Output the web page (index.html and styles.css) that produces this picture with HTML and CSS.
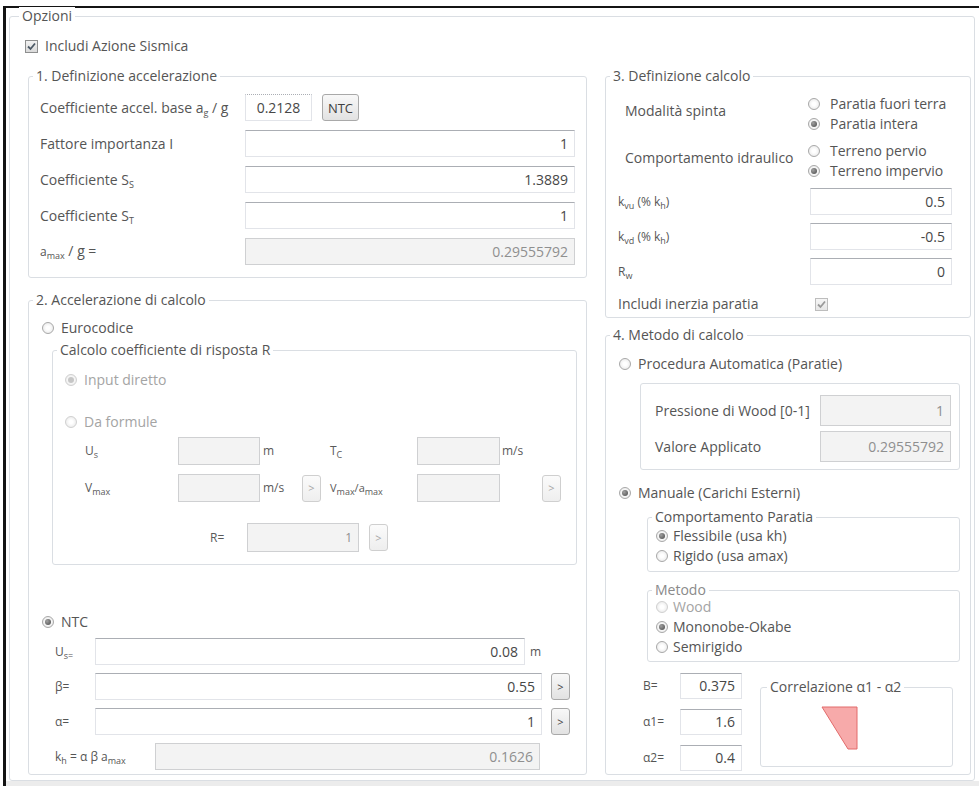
FILE: index.html
```html
<!DOCTYPE html>
<html lang="it">
<head>
<meta charset="utf-8">
<title>Opzioni sismiche</title>
<link rel="stylesheet" href="styles.css">
</head>
<body>
<div class="window">
  <div class="group opzioni">
    <span class="legend">Opzioni</span>
    <div class="top-check">
      <span class="checkbox"><svg class="tick" viewBox="0 0 11 11"><path d="M2 5.5 L4.5 8 L9 2.5"/></svg></span>
      <span>Includi Azione Sismica</span>
    </div>

    <div class="columns">
      <!-- left column: sections 1 and 2 -->
      <div class="col">
        <div class="group sec1">
          <span class="legend">1. Definizione accelerazione</span>
          <div class="frow">
            <span class="flabel">Coefficiente accel. base a<sub>g</sub> / g</span>
            <span class="field short">0.2128</span>
            <span class="button ntc">NTC</span>
          </div>
          <div class="frow"><span class="flabel">Fattore importanza I</span><span class="field wide">1</span></div>
          <div class="frow"><span class="flabel">Coefficiente S<sub>S</sub></span><span class="field wide">1.3889</span></div>
          <div class="frow"><span class="flabel">Coefficiente S<sub>T</sub></span><span class="field wide">1</span></div>
          <div class="frow"><span class="flabel"><span class="amax">a<sub>max</sub></span> / g =</span><span class="field wide dis-field">0.29555792</span></div>
        </div>

        <div class="group sec2">
          <span class="legend">2. Accelerazione di calcolo</span>
          <div class="opt euro"><span class="radio"></span><span>Eurocodice</span></div>

          <div class="group rbox">
            <span class="legend">Calcolo coefficiente di risposta R</span>
            <div class="opt dis in-dir"><span class="radio on dis"></span><span>Input diretto</span></div>
            <div class="opt dis da-form"><span class="radio dis"></span><span>Da formule</span></div>
            <div class="erow us">
              <span class="elabel">U<sub>s</sub></span>
              <span class="field dis-field w82"></span>
              <span class="unit">m</span>
              <span class="elabel2">T<sub>C</sub></span>
              <span class="field dis-field w83"></span>
              <span class="unit2">m/s</span>
            </div>
            <div class="erow vmax">
              <span class="elabel">V<sub>max</sub></span>
              <span class="field dis-field w82"></span>
              <span class="unit"><span class="unit-text">m/s</span><span class="button mini dis-btn">&gt;</span></span>
              <span class="elabel2 tiny">V<sub>max</sub>/a<sub>max</sub></span>
              <span class="field dis-field w83"></span>
              <span class="unit2"></span>
              <span class="button mini dis-btn">&gt;</span>
            </div>
            <div class="erow rrow">
              <span class="rlabel">R=</span>
              <span class="field dis-field r-field">1</span>
              <span class="button mini dis-btn r-btn">&gt;</span>
            </div>
          </div>

          <div class="opt ntc-opt"><span class="radio on"></span><span>NTC</span></div>
          <div class="nrow">
            <span class="nlabel">U<sub>s=</sub></span>
            <span class="field n-us">0.08</span>
            <span class="n-unit">m</span>
          </div>
          <div class="nrow">
            <span class="nlabel">β=</span>
            <span class="field n-long">0.55</span>
            <span class="button mini n-btn">&gt;</span>
          </div>
          <div class="nrow">
            <span class="nlabel">α=</span>
            <span class="field n-long">1</span>
            <span class="button mini n-btn">&gt;</span>
          </div>
          <div class="nrow">
            <span class="nlabel kh">k<sub>h</sub> = α β a<sub>max</sub></span>
            <span class="field dis-field n-kh">0.1626</span>
          </div>
        </div>
      </div>

      <!-- right column: sections 3 and 4 -->
      <div class="col">
        <div class="group sec3">
          <span class="legend">3. Definizione calcolo</span>
          <div class="choice ms">
            <span class="clabel">Modalità spinta</span>
            <div class="choices">
              <div class="opt"><span class="radio"></span><span>Paratia fuori terra</span></div>
              <div class="opt"><span class="radio on"></span><span>Paratia intera</span></div>
            </div>
          </div>
          <div class="choice ci">
            <span class="clabel">Comportamento idraulico</span>
            <div class="choices">
              <div class="opt"><span class="radio"></span><span>Terreno pervio</span></div>
              <div class="opt"><span class="radio on"></span><span>Terreno impervio</span></div>
            </div>
          </div>
          <div class="krow first"><span class="klabel">k<sub>vu</sub> (% k<sub>h</sub>)</span><span class="field kfield">0.5</span></div>
          <div class="krow"><span class="klabel">k<sub>vd</sub> (% k<sub>h</sub>)</span><span class="field kfield">-0.5</span></div>
          <div class="krow"><span class="klabel">R<sub>w</sub></span><span class="field kfield">0</span></div>
          <div class="krow inerzia">
            <span class="klabel big">Includi inerzia paratia</span>
            <span class="checkbox dis-box"><svg class="tick" viewBox="0 0 11 11"><path d="M2 5.5 L4.5 8 L9 2.5"/></svg></span>
          </div>
        </div>

        <div class="group sec4">
          <span class="legend">4. Metodo di calcolo</span>
          <div class="opt proc"><span class="radio"></span><span>Procedura Automatica (Paratie)</span></div>
          <div class="group autobox">
            <div class="arow first"><span class="alabel">Pressione di Wood [0-1]</span><span class="field dis-field afield">1</span></div>
            <div class="arow"><span class="alabel">Valore Applicato</span><span class="field dis-field afield">0.29555792</span></div>
          </div>
          <div class="opt man"><span class="radio on"></span><span>Manuale (Carichi Esterni)</span></div>
          <div class="group subgroup cp">
            <span class="legend">Comportamento Paratia</span>
            <div class="opt"><span class="radio on"></span><span>Flessibile (usa kh)</span></div>
            <div class="opt"><span class="radio"></span><span>Rigido (usa amax)</span></div>
          </div>
          <div class="group subgroup metodo">
            <span class="legend">Metodo</span>
            <div class="opt dis"><span class="radio dis"></span><span>Wood</span></div>
            <div class="opt"><span class="radio on"></span><span>Mononobe-Okabe</span></div>
            <div class="opt"><span class="radio"></span><span>Semirigido</span></div>
          </div>
          <div class="coeffs">
            <div class="coeff-list">
              <div class="crow"><span class="blabel">B=</span><span class="field cfield">0.375</span></div>
              <div class="crow"><span class="blabel">α1=</span><span class="field cfield">1.6</span></div>
              <div class="crow"><span class="blabel">α2=</span><span class="field cfield">0.4</span></div>
            </div>
            <div class="group corr">
              <span class="legend">Correlazione α1 - α2</span>
              <svg class="corr-plot" width="191" height="78" viewBox="0 0 191 78">
                <polygon points="61,19 96,19 96,61 87,61" fill="#f7aaaa" stroke="#e26b6b" stroke-width="1"/>
              </svg>
            </div>
          </div>
        </div>
      </div>
    </div>
  </div>
  <div class="statusbar"></div>
</div>
</body>
</html>
```
FILE: styles.css
```css
* { box-sizing: border-box; }

html, body { margin: 0; padding: 0; background: #fff; }

body {
  width: 979px;
  height: 786px;
  overflow: hidden;
  font-family: "Open Sans", "Noto Sans", "DejaVu Sans", sans-serif;
  font-size: 14px;
  line-height: 18px;
  color: #555;
}

sub { font-size: 9px; line-height: 0; vertical-align: -3px; }

/* window frame */
.window {
  margin: 6px 0 0 3px;
  height: 780px;
  border-left: 3px solid #141414;
  border-top: 2px solid #141414;
  display: flex;
  flex-direction: column;
}
.statusbar { flex: 1; background: #ececec; }

/* group boxes */
.group {
  position: relative;
  border: 1px solid #dadee3;
  border-radius: 3px;
}
.legend {
  position: absolute;
  top: -10px;
  left: 4px;
  padding: 0 3px;
  background: #fff;
  line-height: 18px;
  white-space: nowrap;
}

.opzioni { margin: 8px 4px 0 3px; height: 765px; }
.opzioni > .legend { left: 9px; }

.top-check {
  display: flex;
  align-items: center;
  gap: 7px;
  height: 16px;
  margin: 21px 0 0 15px;
}

.columns {
  display: grid;
  grid-template-columns: 559px 366px;
  column-gap: 18px;
  align-items: start;
  margin: 22px 0 0 18px;
}
.col { display: flex; flex-direction: column; }

/* common controls */
.field {
  display: flex;
  align-items: center;
  justify-content: flex-end;
  height: 27px;
  padding: 0 6px;
  border: 1px solid #e2e4e9;
  border-top-color: #abaeb4;
  background: #fff;
  color: #474747;
  white-space: nowrap;
}
.dis-field {
  background: #f3f3f3;
  border-color: #cfd0d2;
  color: #8f8f8f;
}

.button {
  display: flex;
  align-items: center;
  justify-content: center;
  height: 27px;
  border: 1px solid #a9a9a9;
  border-radius: 3px;
  background: linear-gradient(#f8f8f8, #e2e2e2);
  color: #404040;
}
.button.mini { width: 19px; font-size: 11px; }
.dis-btn { border-color: #cfcfcf; background: linear-gradient(#fbfbfb, #eeeeee); color: #a5a5a5; }

.opt {
  display: flex;
  align-items: center;
  gap: 7px;
  height: 16px;
  line-height: 16px;
  white-space: nowrap;
}
.dis { color: #a4a4a4; }

.radio {
  position: relative;
  flex: none;
  width: 12px;
  height: 12px;
  border-radius: 50%;
  border: 1px solid #a8a8a8;
  background: radial-gradient(circle, #ffffff 25%, #e3e3e3 100%);
}
.radio.on::after {
  content: "";
  position: absolute;
  left: 2px;
  top: 2px;
  width: 6px;
  height: 6px;
  border-radius: 50%;
  background: radial-gradient(circle at 35% 35%, #a0a0a0, #484848);
}
.radio.dis { border-color: #d0d0d0; }
.radio.dis.on::after { background: #c6c6c6; }

.checkbox {
  position: relative;
  flex: none;
  width: 13px;
  height: 13px;
  border: 1px solid #8e8f8f;
  background: linear-gradient(#f2f2f2, #dadada);
}
.checkbox .tick {
  position: absolute;
  left: 0;
  top: 0;
  width: 11px;
  height: 11px;
  fill: none;
  stroke: #4c5966;
  stroke-width: 1.8;
}
.dis-box { border-color: #bdbdbd; background: linear-gradient(#f6f6f6, #e6e6e6); }
.dis-box .tick { stroke: #9a9a9a; }

/* section 1 */
.sec1 {
  height: 202px;
  padding: 17px 0 0 11px;
  display: flex;
  flex-direction: column;
  gap: 9px;
}
.frow { display: flex; align-items: center; height: 27px; }
.flabel { width: 205px; white-space: nowrap; }
.amax { font-size: 12px; }
.field.wide { width: 330px; }
.field.short { width: 67px; justify-content: center; border-top-style: dotted; }
.ntc { width: 37px; margin-left: 10px; font-size: 13px; }

/* section 2 */
.sec2 { margin-top: 22px; height: 475px; }
.euro { margin: 19px 0 0 13px; }

.rbox { margin: 14px 0 0 23px; width: 525px; height: 215px; }
.in-dir { margin: 21px 0 0 12px; }
.da-form { margin: 26px 0 0 12px; }
.erow {
  display: flex;
  align-items: center;
  height: 28px;
  padding-left: 32px;
  font-size: 12px;
  color: #5a5a5a;
}
.erow.us { margin-top: 7px; }
.erow.vmax { margin-top: 9px; }
.erow .field { height: 28px; }
.elabel { width: 93px; }
.w82 { width: 82px; }
.w83 { width: 83px; }
.unit { display: flex; align-items: center; width: 70px; padding-left: 3px; }
.unit-text { width: 39px; }
.elabel2 { width: 87px; }
.elabel2.tiny { font-size: 11px; }
.unit2 { width: 42px; padding-left: 2px; }
.erow.rrow { margin-top: 21px; height: 29px; padding-left: 157px; }
.rrow .field { height: 29px; }
.rlabel { width: 37px; }
.r-field { width: 112px; }
.r-btn { margin-left: 10px; }

.ntc-opt { margin: 49px 0 0 13px; }
.nrow {
  display: flex;
  align-items: center;
  height: 27px;
  margin-top: 8px;
  padding-left: 26px;
  font-size: 12px;
}
.nrow .field { font-size: 14px; }
.nlabel { width: 40px; white-space: nowrap; }
.nlabel.kh { width: 100px; }
.n-us { width: 430px; }
.n-unit { margin-left: 5px; }
.n-long { width: 447px; }
.n-btn { margin-left: 9px; }
.n-kh { width: 385px; }

/* section 3 */
.sec3 { height: 242px; }
.choice { display: flex; align-items: flex-start; }
.choice.ms { margin-top: 17px; }
.choice.ci { margin-top: 7px; }
.clabel { width: 202px; padding-left: 19px; margin-top: 8px; white-space: nowrap; }
.choices .opt { height: 20px; gap: 10px; }

.krow {
  display: flex;
  align-items: center;
  height: 27px;
  margin-top: 8px;
  padding-left: 12px;
}
.krow.first { margin-top: 7px; }
.klabel { width: 192px; font-size: 12px; white-space: nowrap; }
.klabel sub { font-size: 9px; }
.klabel.big { font-size: 14px; }
.kfield { width: 142px; }
.krow.inerzia { margin-top: 11px; height: 16px; }
.inerzia .checkbox { margin-left: 5px; }

/* section 4 */
.sec4 { margin-top: 17px; height: 440px; }
.proc { margin: 20px 0 0 13px; }

.autobox { margin: 11px 0 0 34px; width: 320px; height: 87px; }
.arow { display: flex; align-items: center; height: 31px; margin-top: 5px; padding-left: 14px; }
.arow.first { margin-top: 11px; }
.alabel { width: 165px; white-space: nowrap; }
.afield { width: 131px; height: 31px; }

.man { margin: 15px 0 0 13px; }

.subgroup { margin-left: 41px; width: 313px; }
.subgroup .opt { height: 20px; gap: 5px; }
.cp { margin-top: 16px; height: 55px; padding: 8px 0 0 8px; }
.metodo { margin-top: 18px; height: 72px; padding: 6px 0 0 8px; }
.metodo > .legend { color: #8a8a8a; }

.coeffs { display: flex; align-items: flex-start; margin: 11px 0 0 34px; }
.coeff-list { display: flex; flex-direction: column; gap: 10px; }
.crow { display: flex; align-items: center; height: 26px; font-size: 12px; }
.blabel { width: 40px; padding-left: 3px; }
.cfield { width: 62px; height: 26px; font-size: 14px; }

.corr { margin: 14px 0 0 18px; width: 193px; height: 80px; }
.corr > .legend { left: 6px; }
.corr-plot { display: block; }
```
